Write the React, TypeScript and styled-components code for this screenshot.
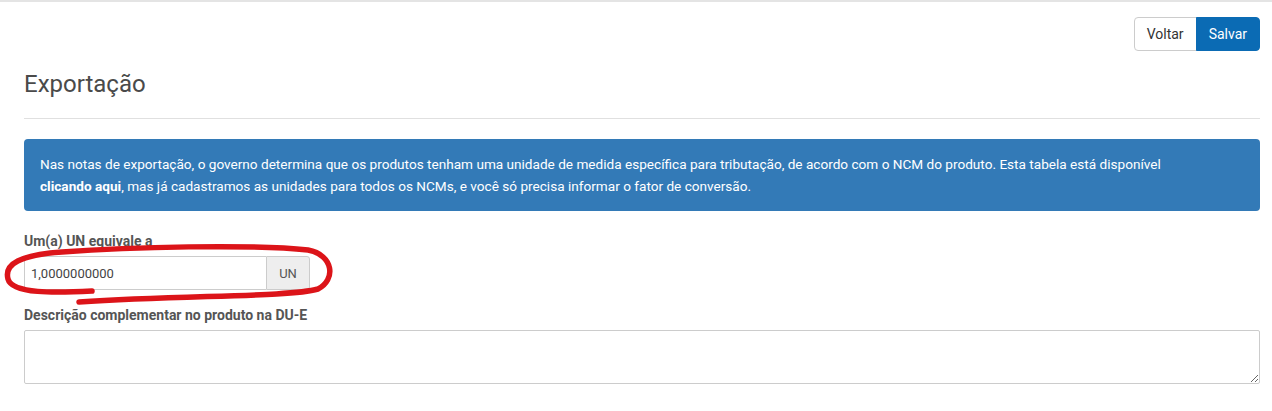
import React from 'react';
import styled, { createGlobalStyle } from 'styled-components';

const GlobalStyle = createGlobalStyle`
  * { box-sizing: border-box; }
  body {
    margin: 0;
    font-family: Roboto, "Liberation Sans", Arial, sans-serif;
    background: #fff;
    color: #555;
  }
`;

const Page = styled.div`
  border-top: 2px solid #e4e4e4;
  padding: 15px 12px 20px 24px;
  position: relative;
`;

const Toolbar = styled.div`
  display: flex;
  justify-content: flex-end;
`;

const Btn = styled.button<{ primary?: boolean }>`
  height: 34px;
  padding: 0 12px;
  font-family: inherit;
  font-size: 14px;
  border: 1px solid ${p => (p.primary ? '#0b6bb4' : '#ccc')};
  background: ${p => (p.primary ? '#0b6bb4' : '#fff')};
  color: ${p => (p.primary ? '#fff' : '#333')};
  border-radius: ${p => (p.primary ? '0 4px 4px 0' : '4px 0 0 4px')};
  ${p => (p.primary ? 'margin-left: -1px;' : '')}
`;

const Title = styled.h1`
  margin: 19px 0 0;
  font-size: 24px;
  font-weight: 400;
  color: #4a4a4a;
  padding-bottom: 20px;
  border-bottom: 1px solid #e0e0e0;
`;

const Alert = styled.div`
  margin-top: 20px;
  background: #337ab7;
  color: #fff;
  border-radius: 4px;
  padding: 14px 16px;
  font-size: 13.6px;
  line-height: 22px;

  b { font-weight: 700; }
`;

const Field = styled.div<{ gap: number }>`
  margin-top: ${p => p.gap}px;
`;

const Label = styled.label`
  display: block;
  font-size: 14px;
  font-weight: 700;
  color: #555;
  margin-bottom: 7px;
`;

const InputGroup = styled.div`
  display: flex;
  width: 286px;
  height: 34px;
`;

const Input = styled.input`
  flex: 1;
  min-width: 0;
  border: 1px solid #ccc;
  border-right: none;
  border-radius: 3px 0 0 3px;
  padding: 0 6px;
  font-family: inherit;
  font-size: 13px;
  color: #444;
`;

const Addon = styled.span`
  display: flex;
  align-items: center;
  justify-content: center;
  width: 44px;
  background: #eee;
  border: 1px solid #ccc;
  border-radius: 0 3px 3px 0;
  font-size: 13px;
  color: #555;
`;

const TextArea = styled.textarea`
  display: block;
  width: 100%;
  height: 54px;
  border: 1px solid #ccc;
  border-radius: 2px;
  font-family: inherit;
  resize: vertical;
`;

const Marker = styled.svg`
  position: absolute;
  left: 0;
  top: 0;
  pointer-events: none;
`;

export default function App() {
  return (
    <>
      <GlobalStyle />
      <Page>
        <Toolbar>
          <Btn>Voltar</Btn>
          <Btn primary>Salvar</Btn>
        </Toolbar>
        <Title>Exportação</Title>
        <Alert>
          Nas notas de exportação, o governo determina que os produtos tenham uma unidade de medida específica para tributação, de acordo com o NCM do produto. Esta tabela está disponível
          <br />
          <b>clicando aqui</b>, mas já cadastramos as unidades para todos os NCMs, e você só precisa informar o fator de conversão.
        </Alert>
        <Field gap={22}>
          <Label>Um(a) UN equivale a</Label>
          <InputGroup>
            <Input defaultValue="1,0000000000" />
            <Addon>UN</Addon>
          </InputGroup>
        </Field>
        <Field gap={17}>
          <Label>Descrição complementar no produto na DU-E</Label>
          <TextArea />
        </Field>
        <Marker width="340" height="310" viewBox="0 0 340 310">
          <path
            d="M 92 289 C 55 291, 12 292, 8 277 C 4 262, 20 253, 62 250 C 130 245, 250 242, 308 248 C 334 253, 336 278, 318 287 C 290 295, 190 293, 79 300"
            fill="none"
            stroke="#dc1419"
            strokeWidth="5.5"
            strokeLinecap="round"
            strokeLinejoin="round"
          />
        </Marker>
      </Page>
    </>
  );
}
